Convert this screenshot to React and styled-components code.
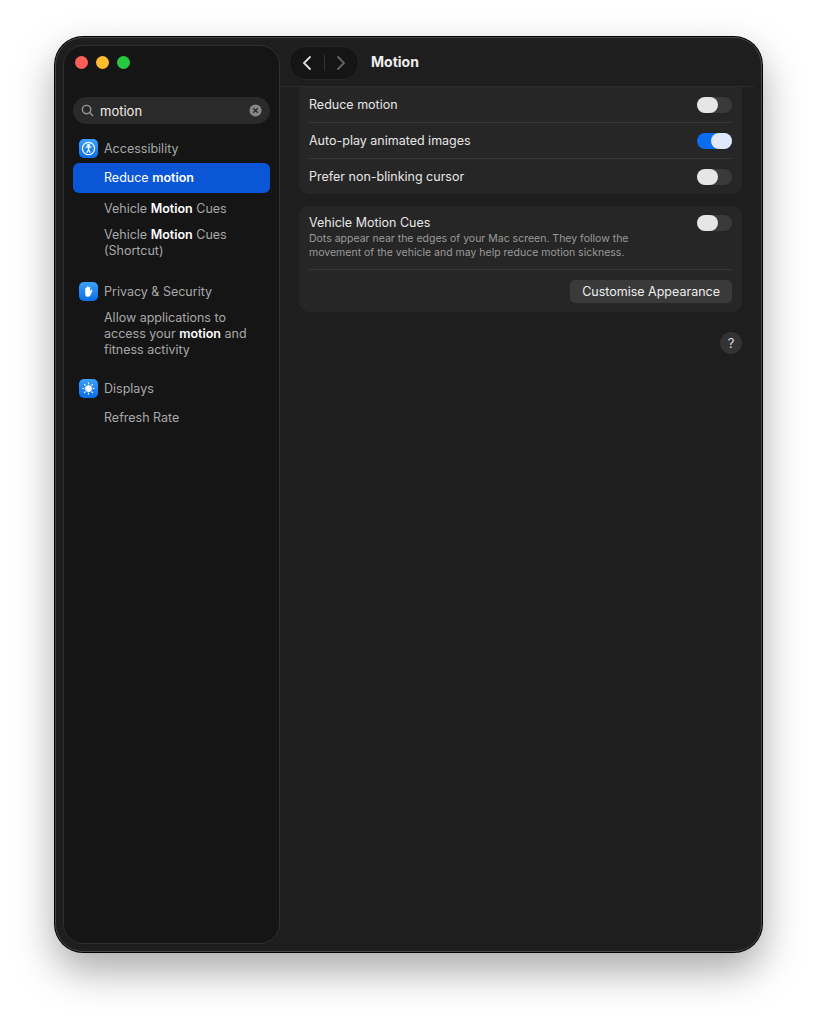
import React from "react";
import styled, { createGlobalStyle } from "styled-components";

const G = createGlobalStyle`
  body { margin:0; background:#fff; font-family: Inter, "Noto Sans", sans-serif; -webkit-font-smoothing: antialiased; }
`;
const Page = styled.div`width:816px;height:1024px;display:flex;padding:37px 0 0 55px;box-sizing:border-box;`;
const Win = styled.div`
  width:707px;height:915px;box-sizing:border-box;background:#1e1e1e;border-radius:28px;
  border:1px solid #4a4a4a;box-shadow:0 0 0 1px #000, 0 18px 40px rgba(0,0,0,.35);
  display:flex;padding:7px;gap:0;overflow:hidden;
`;
const Side = styled.div`
  width:217px;height:100%;box-sizing:border-box;background:#151515;border:1px solid #303030;border-radius:20px;
  display:flex;flex-direction:column;padding:0 9px;
`;
const Lights = styled.div`display:flex;gap:8px;padding:10px 0 0 2px;height:32px;box-sizing:border-box;`;
const Light = styled.span`width:13px;height:13px;border-radius:50%;background:${p=>p.c};`;
const Search = styled.div`
  margin-top:19px;height:27px;border-radius:14px;background:#2a2a2a;display:flex;align-items:center;padding:0 8px;gap:6px;
  color:#eee;font-size:13px;
`;
const Grow = styled.span`flex:1;`;
const Section = styled.div`display:flex;align-items:center;gap:6px;padding:0 6px;height:24px;color:#a8a8a8;font-size:12.5px;margin-top:${p=>p.mt||0}px;`;
const Icon = styled.span`width:19px;height:19px;border-radius:5px;background:linear-gradient(#3aa0ff,#0a6ee8);display:flex;align-items:center;justify-content:center;`;
const Item = styled.div`
  padding:${p=>p.sel?"7px":"4px"} 8px ${p=>p.sel?"7px":"4px"} 31px;margin-top:${p=>p.mt||0}px;border-radius:6px;font-size:12.5px;line-height:16px;
  color:${p=>p.sel?"#fff":"#a8a8a8"};background:${p=>p.sel?"#0a56d6":"transparent"};
  b{color:#fff;font-weight:600;}
`;
const Main = styled.div`flex:1;display:flex;flex-direction:column;`;
const Header = styled.div`height:42px;box-sizing:border-box;display:flex;align-items:flex-start;padding-top:1px;gap:12px;padding-left:9px;border-bottom:1px solid #2c2c2c;`;
const Nav = styled.div`width:68px;height:32px;border-radius:16px;background:#151515;border:1px solid #262626;display:flex;align-items:center;`;
const NavBtn = styled.span`flex:1;display:flex;justify-content:center;`;
const Divider = styled.span`width:1px;height:16px;background:#333;`;
const Title = styled.div`color:#eee;font-weight:700;font-size:14px;line-height:32px;`;
const Content = styled.div`padding:0 12px 0 19px;display:flex;flex-direction:column;gap:12px;`;
const Card = styled.div`background:#262626;border-radius:10px;padding:0 10px;border-top-left-radius:${p=>p.flat?0:10}px;border-top-right-radius:${p=>p.flat?0:10}px;`;
const Row = styled.div`
  display:flex;align-items:center;justify-content:space-between;height:35px;color:#e6e6e6;font-size:12.5px;
  & + &{border-top:1px solid #383838;}
`;
const Toggle = styled.span`
  width:35px;height:16px;border-radius:8px;background:${p=>p.on?"#0a6cf0":"#3a3a3a"};display:flex;
  justify-content:${p=>p.on?"flex-end":"flex-start"};
  &::after{content:"";width:21px;height:16px;border-radius:8px;background:${p=>p.on?"#dfe9f9":"#e6e6e6"};}
`;
const VRow = styled.div`display:flex;justify-content:space-between;padding:9px 0 9px;border-bottom:1px solid #383838;`;
const VTitle = styled.div`color:#e6e6e6;font-size:12.5px;margin-bottom:2px;`;
const VDesc = styled.div`color:#9a9a9a;font-size:10.5px;line-height:14px;`;
const BtnRow = styled.div`display:flex;justify-content:flex-end;padding:10px 0 9px;`;
const Btn = styled.div`background:#3a3a3a;color:#eee;font-size:12.5px;padding:4px 12px;border-radius:5px;`;
const Help = styled.div`align-self:flex-end;margin:8px 0 0;width:22px;height:22px;border-radius:50%;background:#333;color:#ddd;font-size:13px;display:flex;align-items:center;justify-content:center;`;

export default function App(){
  return <><G/><Page><Win>
    <Side>
      <Lights><Light c="#fe5f57"/><Light c="#febc2e"/><Light c="#28c840"/></Lights>
      <Search>
        <svg width="13" height="13" viewBox="0 0 14 14" fill="none" stroke="#999" strokeWidth="1.5"><circle cx="6" cy="6" r="4.5"/><path d="M9.5 9.5L13 13"/></svg>
        <Grow>motion</Grow>
        <svg width="13" height="13" viewBox="0 0 14 14"><circle cx="7" cy="7" r="6.5" fill="#888"/><path d="M4.5 4.5l5 5M9.5 4.5l-5 5" stroke="#2a2a2a" strokeWidth="1.5"/></svg>
      </Search>
      <Section mt={12}><Icon><svg width="15" height="15" viewBox="0 0 16 16" fill="none" stroke="#fff" strokeWidth="1.3"><circle cx="8" cy="8" r="6.5"/><circle cx="8" cy="4.6" r="1" fill="#fff"/><path d="M5 6.5h6M8 6.5v3M8 9.5l-2 3M8 9.5l2 3"/></svg></Icon>Accessibility</Section>
      <Item sel mt={3}>Reduce <b>motion</b></Item>
      <Item mt={4}>Vehicle <b>Motion</b> Cues</Item>
      <Item mt={2}>Vehicle <b>Motion</b> Cues (Shortcut)</Item>
      <Section mt={16}><Icon><svg width="13" height="13" viewBox="0 0 16 16" fill="#fff"><path d="M4 8V4a1 1 0 012 0v3V2.5a1 1 0 012 0V7V3a1 1 0 012 0v5l1-2a1 1 0 011.7 1l-2 5a3.5 3.5 0 01-3.3 2.5H7.5A3.5 3.5 0 014 11z"/></svg></Icon>Privacy &amp; Security</Section>
      <Item mt={3}>Allow applications to access your <b>motion</b> and fitness activity</Item>
      <Section mt={14}><Icon><svg width="15" height="15" viewBox="0 0 16 16" fill="#fff" stroke="#fff" strokeWidth="1.2"><circle cx="8" cy="8" r="3"/><path d="M8 1.5v2M8 12.5v2M1.5 8h2M12.5 8h2M3.4 3.4l1.4 1.4M11.2 11.2l1.4 1.4M3.4 12.6l1.4-1.4M11.2 4.8l1.4-1.4"/></svg></Icon>Displays</Section>
      <Item mt={6}>Refresh Rate</Item>
    </Side>
    <Main>
      <Header>
        <Nav>
          <NavBtn><svg width="10" height="16" viewBox="0 0 10 16" fill="none" stroke="#ddd" strokeWidth="1.8" strokeLinecap="round"><path d="M8 2L2 8l6 6"/></svg></NavBtn>
          <Divider/>
          <NavBtn><svg width="10" height="16" viewBox="0 0 10 16" fill="none" stroke="#666" strokeWidth="1.8" strokeLinecap="round"><path d="M2 2l6 6-6 6"/></svg></NavBtn>
        </Nav>
        <Title>Motion</Title>
      </Header>
      <Content>
        <Card flat>
          <Row>Reduce motion<Toggle/></Row>
          <Row>Auto-play animated images<Toggle on/></Row>
          <Row>Prefer non-blinking cursor<Toggle/></Row>
        </Card>
        <Card>
          <VRow>
            <div><VTitle>Vehicle Motion Cues</VTitle>
            <VDesc>Dots appear near the edges of your Mac screen. They follow the<br/>movement of the vehicle and may help reduce motion sickness.</VDesc></div>
            <Toggle/>
          </VRow>
          <BtnRow><Btn>Customise Appearance</Btn></BtnRow>
        </Card>
        <Help>?</Help>
      </Content>
    </Main>
  </Win></Page></>;
}
